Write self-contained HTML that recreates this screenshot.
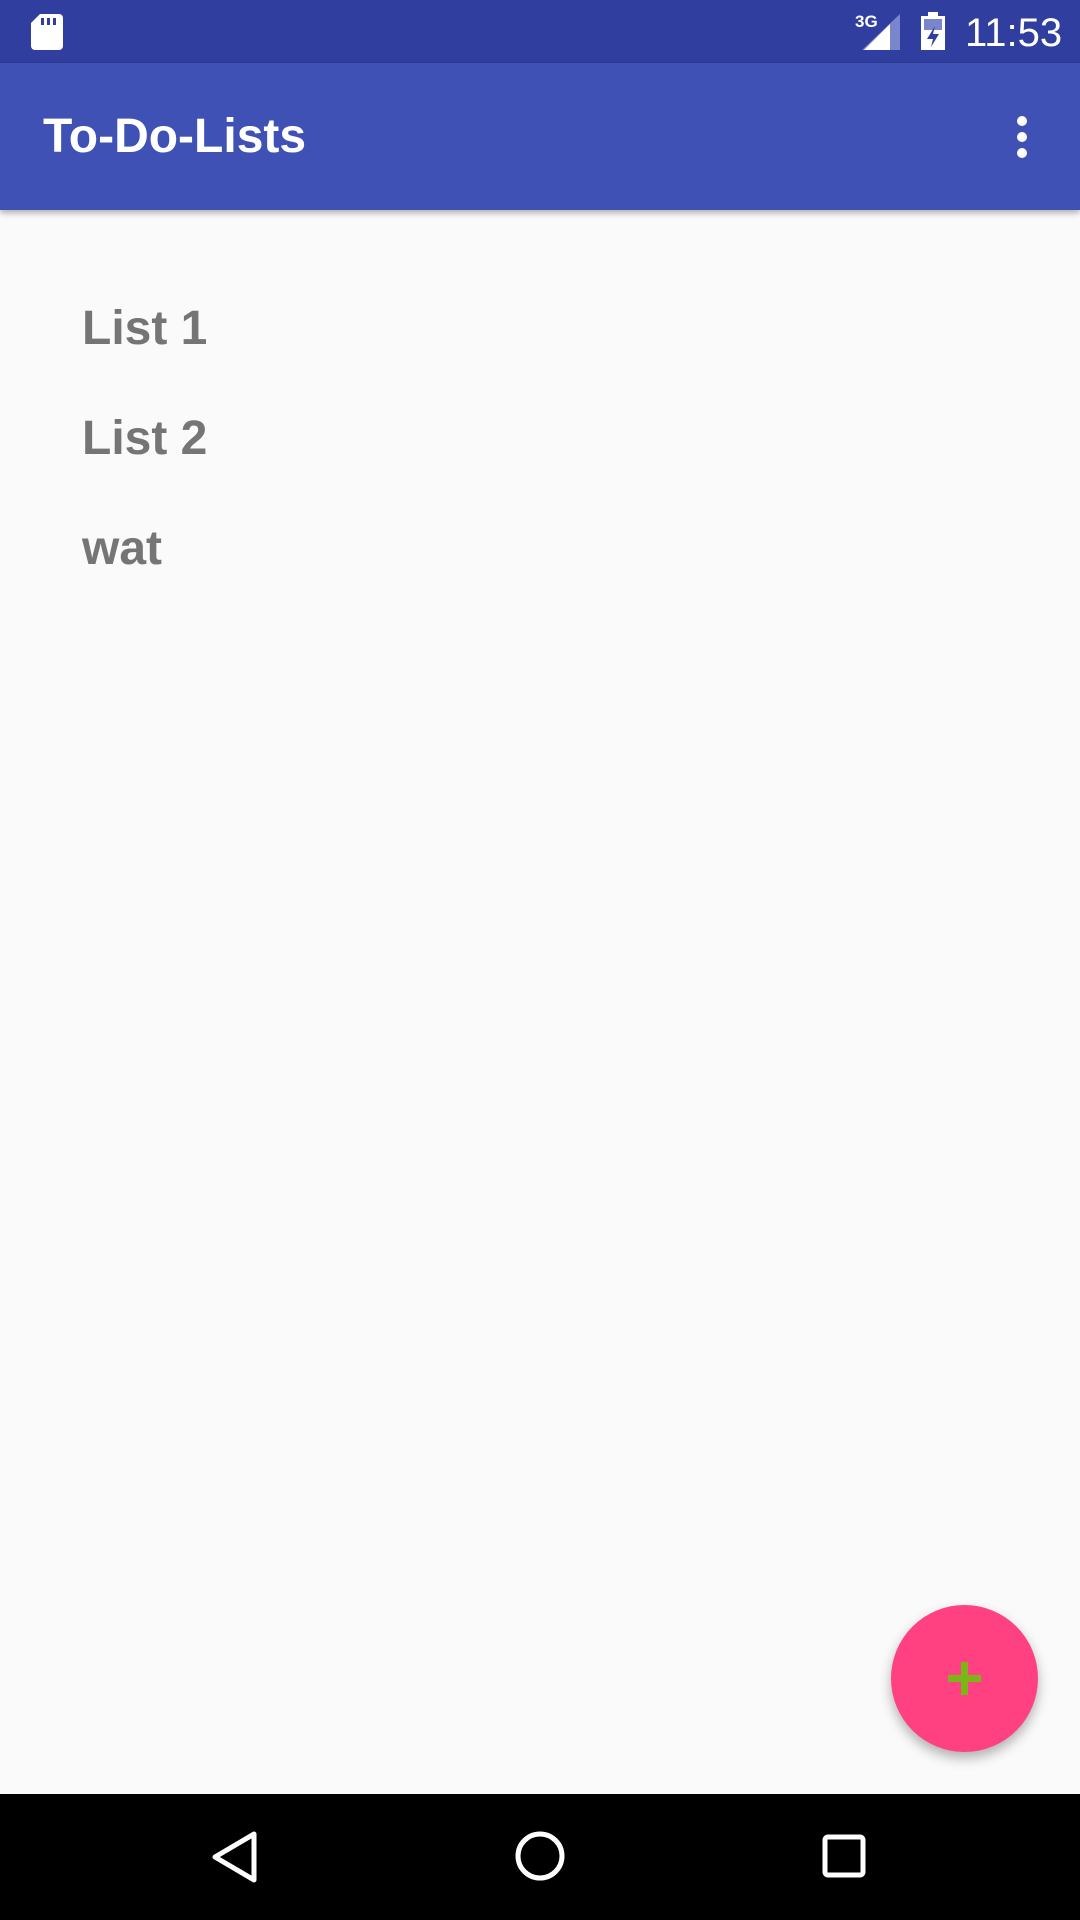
<!DOCTYPE html>
<html><head><meta charset="utf-8"><style>
*{margin:0;padding:0;box-sizing:border-box}
body{width:1080px;height:1920px;background:#fafafa;font-family:"Liberation Sans",sans-serif;position:relative;overflow:hidden}
.status{position:absolute;top:0;left:0;width:1080px;height:63px;background:#303f9f}
.appbar{position:absolute;top:63px;left:0;width:1080px;height:147px;background:#3f51b5;box-shadow:0 3px 6px rgba(0,0,0,.3)}
.title{position:absolute;left:43px;top:46px;color:#fff;font-size:48px;font-weight:bold}
.item{position:absolute;left:82px;color:#757575;font-weight:bold;font-size:48px}
.fab{position:absolute;left:891px;top:1605px;width:147px;height:147px;border-radius:50%;background:#ff4081;box-shadow:0 6px 12px rgba(0,0,0,.3)}
.nav{position:absolute;top:1794px;left:0;width:1080px;height:126px;background:#000}
</style></head><body>
<div class="status">
<svg style="position:absolute;left:31px;top:14px" width="32" height="36" viewBox="0 0 32 36"><path d="M9 0H28a4 4 0 0 1 4 4V32a4 4 0 0 1-4 4H4a4 4 0 0 1-4-4V9z" fill="#fff"/><rect x="10" y="4" width="3" height="7" fill="#303f9f"/><rect x="16" y="4" width="3" height="7" fill="#303f9f"/><rect x="22" y="4" width="3" height="7" fill="#303f9f"/></svg>
<div style="position:absolute;left:855px;top:12px;color:#fff;font-size:17px;font-weight:bold">3G</div>
<svg style="position:absolute;left:862px;top:14px" width="38" height="36"><polygon points="38,0 38,36 0,36" fill="#7986cb"/><polygon points="28,10 28,36 2,36" fill="#fff"/></svg>
<svg style="position:absolute;left:921px;top:12px" width="24" height="38"><rect x="7" y="0" width="10" height="4" fill="#fff"/><rect x="0" y="4" width="24" height="34" fill="#fff"/><rect x="3" y="7" width="18" height="11" fill="#7986cb"/><polygon points="14,14 6,27 12,27 10,35 18,22 12,22" fill="#303f9f"/></svg>
<div style="position:absolute;left:965px;top:11px;color:#fff;font-size:40px">11:53</div>
</div>
<div class="appbar"><div class="title">To-Do-Lists</div>
<svg style="position:absolute;left:1014px;top:52px" width="16" height="44"><circle cx="8" cy="6" r="5" fill="#fff"/><circle cx="8" cy="22" r="5" fill="#fff"/><circle cx="8" cy="38" r="5" fill="#fff"/></svg>
</div>
<div class="item" style="top:301px">List 1</div>
<div class="item" style="top:411px">List 2</div>
<div class="item" style="top:521px">wat</div>
<div class="fab"><svg style="position:absolute;left:55px;top:55px" width="37" height="37"><rect x="15" y="2" width="7" height="33" fill="#7cb518"/><rect x="2" y="15" width="33" height="7" fill="#7cb518"/></svg></div>
<div class="nav">
<svg style="position:absolute;left:210px;top:36px" width="50" height="54"><polygon points="44,4 44,50 5,27" fill="none" stroke="#fff" stroke-width="5" stroke-linejoin="round"/></svg>
<svg style="position:absolute;left:513px;top:35px" width="54" height="54"><circle cx="27" cy="27" r="22" fill="none" stroke="#fff" stroke-width="5"/></svg>
<svg style="position:absolute;left:822px;top:40px" width="44" height="44"><rect x="3" y="3" width="38" height="38" rx="3" fill="none" stroke="#fff" stroke-width="5"/></svg>
</div>
</body></html>
